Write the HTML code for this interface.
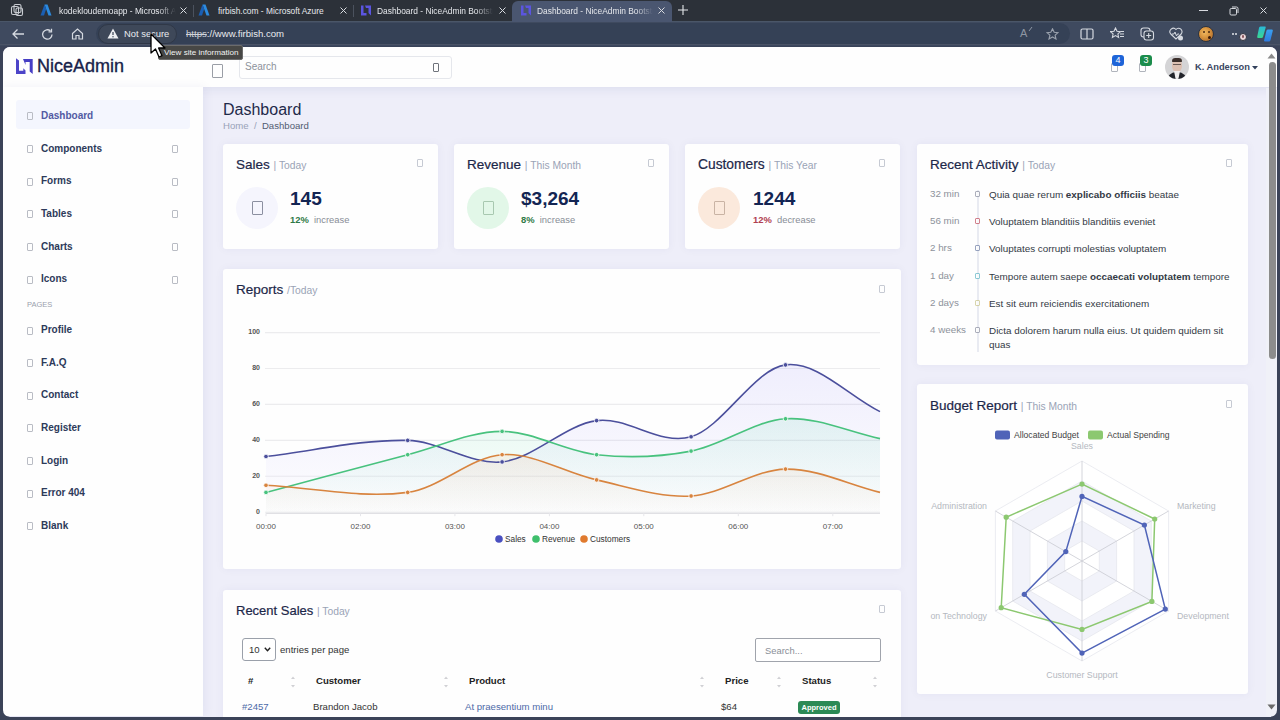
<!DOCTYPE html>
<html><head><meta charset="utf-8">
<style>
*{box-sizing:border-box;margin:0;padding:0}
html,body{width:1280px;height:720px;overflow:hidden;background:#2e343d;font-family:"Liberation Sans",sans-serif}
.a{position:absolute;white-space:nowrap}
#tabs{position:absolute;left:0;top:0;width:1280px;height:21px;background:#2c3139}
#toolbar{position:absolute;left:0;top:21px;width:1280px;height:26px;background:#3f4a5f;border-top:1px solid #4a5668;border-bottom:1px solid #343a46}
#frame{position:absolute;left:0;top:46px;width:1280px;height:674px;background:#3b4358}
#content{position:absolute;left:3px;top:47px;width:1274px;height:670px;background:#eeeef9;border-radius:7px;overflow:hidden}
.tabt{color:#e6e8ec;font-size:8.4px;top:6px;overflow:hidden;-webkit-mask-image:linear-gradient(to right,#000 85%,transparent)}
.tabx{color:#d8dbe0;font-size:11px;top:4px}
.card{position:absolute;background:#fefefe;border-radius:3px;box-shadow:0 0 10px rgba(30,20,112,0.05)}
.ct{position:absolute;color:#1c2749;font-size:13.5px;white-space:nowrap;-webkit-text-stroke:0.2px #1c2749}
.ct span{color:#9aa3b6;font-size:10.3px;-webkit-text-stroke:0}
.dots{position:absolute;width:6px;height:8px;border:1px solid #c6cad3;border-radius:1px}
.nav{position:absolute;left:41px;color:#2d3a5a;font-size:10px;font-weight:700;white-space:nowrap}
.nico{position:absolute;left:27px;width:6px;height:8px;border:1px solid #b9bcc4;border-radius:1px}
.chev{position:absolute;left:172px;width:6px;height:8px;border:1px solid #b9bcc4;border-radius:1px}
</style></head>
<body>
<div id="tabs"></div>
<div id="toolbar"></div>
<div id="frame"></div>
<!-- tab strip -->
<svg class="a" style="left:10px;top:3px" width="14" height="14" viewBox="0 0 14 14"><g fill="none" stroke="#c9ccd2" stroke-width="1.1"><rect x="1.5" y="3.5" width="7" height="8" rx="1.5"/><rect x="4" y="1.5" width="7" height="8" rx="1.5"/><rect x="6" y="5" width="6.5" height="7.5" rx="1.5"/></g></svg>
<svg class="a" style="left:40px;top:4px" width="12" height="12" viewBox="0 0 12 12"><path d="M4.5 0.5 L7.5 0.5 L11.5 11.5 L8.5 11.5 Z" fill="#2c8be0"/><path d="M4.5 0.5 L0.5 11.5 L4 11.5 L6.2 5 Z" fill="#1a5fb4"/></svg>
<div class="a tabt" style="left:59px;width:117px">kodekloudemoapp - Microsoft A</div>
<svg class="a" style="left:179px;top:6px" width="9" height="9" viewBox="0 0 9 9"><path d="M1.5 1.5 L7.5 7.5 M7.5 1.5 L1.5 7.5" stroke="#d8dbe0" stroke-width="1"/></svg>
<div class="a" style="left:193px;top:5px;width:1px;height:12px;background:#4b525e"></div>
<svg class="a" style="left:198px;top:4px" width="12" height="12" viewBox="0 0 12 12"><path d="M4.5 0.5 L7.5 0.5 L11.5 11.5 L8.5 11.5 Z" fill="#2c8be0"/><path d="M4.5 0.5 L0.5 11.5 L4 11.5 L6.2 5 Z" fill="#1a5fb4"/></svg>
<div class="a tabt" style="left:218px;width:120px;-webkit-mask-image:none">firbish.com - Microsoft Azure</div>
<svg class="a" style="left:339px;top:6px" width="9" height="9" viewBox="0 0 9 9"><path d="M1.5 1.5 L7.5 7.5 M7.5 1.5 L1.5 7.5" stroke="#d8dbe0" stroke-width="1"/></svg>
<div class="a" style="left:353px;top:5px;width:1px;height:12px;background:#4b525e"></div>
<svg class="a" style="left:360px;top:4px" width="12" height="12" viewBox="0 0 12 12"><path d="M1 1.5 L3.5 1.5 L3.5 9 L6.5 9 L6.5 11.5 L1 11.5 Z M5 1.5 L11 1.5 L11 11.5 L8.5 9 L8.5 4 L6 4 Z" fill="#5b55e0"/></svg>
<div class="a tabt" style="left:377px;width:116px">Dashboard - NiceAdmin Bootstrap</div>
<svg class="a" style="left:498px;top:6px" width="9" height="9" viewBox="0 0 9 9"><path d="M1.5 1.5 L7.5 7.5 M7.5 1.5 L1.5 7.5" stroke="#d8dbe0" stroke-width="1"/></svg>
<div class="a" style="left:512px;top:1px;width:160px;height:21px;background:#4a5670;border-radius:6px 6px 0 0"></div>
<svg class="a" style="left:520px;top:4px" width="12" height="12" viewBox="0 0 12 12"><path d="M1 1.5 L3.5 1.5 L3.5 9 L6.5 9 L6.5 11.5 L1 11.5 Z M5 1.5 L11 1.5 L11 11.5 L8.5 9 L8.5 4 L6 4 Z" fill="#5b55e0"/></svg>
<div class="a tabt" style="left:537px;width:116px">Dashboard - NiceAdmin Bootstrap</div>
<svg class="a" style="left:657px;top:6px" width="9" height="9" viewBox="0 0 9 9"><path d="M1.5 1.5 L7.5 7.5 M7.5 1.5 L1.5 7.5" stroke="#d8dbe0" stroke-width="1"/></svg>
<svg class="a" style="left:677px;top:4px" width="12" height="12" viewBox="0 0 12 12"><path d="M6 1 V11 M1 6 H11" stroke="#e6e8ec" stroke-width="1.1"/></svg>
<div class="a" style="left:1199px;top:10px;width:9px;height:1px;background:#d8dbe0"></div>
<svg class="a" style="left:1229px;top:6px" width="10" height="10" viewBox="0 0 10 10"><rect x="1" y="2.5" width="6.5" height="6.5" rx="1.2" fill="none" stroke="#d8dbe0" stroke-width="1"/><path d="M3 1 H7.5 Q9 1 9 2.5 V7" fill="none" stroke="#d8dbe0" stroke-width="1"/></svg>
<svg class="a" style="left:1259px;top:6px" width="9" height="9" viewBox="0 0 9 9"><path d="M1.5 1.5 L7.5 7.5 M7.5 1.5 L1.5 7.5" stroke="#d8dbe0" stroke-width="1"/></svg>
<!-- toolbar -->
<svg class="a" style="left:11px;top:28px" width="14" height="12" viewBox="0 0 14 12"><path d="M13 6 H2 M6.5 1.5 L2 6 L6.5 10.5" fill="none" stroke="#d5d9e0" stroke-width="1.3"/></svg>
<svg class="a" style="left:41px;top:28px" width="13" height="13" viewBox="0 0 13 13"><path d="M11 6.5 A4.7 4.7 0 1 1 9.5 3" fill="none" stroke="#d5d9e0" stroke-width="1.3"/><path d="M10.5 0.8 V3.8 H7.5" fill="none" stroke="#d5d9e0" stroke-width="1.3"/></svg>
<svg class="a" style="left:71px;top:28px" width="13" height="12" viewBox="0 0 13 12"><path d="M1.5 5.5 L6.5 1 L11.5 5.5 V11 H8 V7.5 H5 V11 H1.5 Z" fill="none" stroke="#d5d9e0" stroke-width="1.2"/></svg>
<div class="a" style="left:96px;top:23px;width:974px;height:21px;border-radius:11px;background:#354156"></div>
<div class="a" style="left:0;top:44px;width:1280px;height:1px;background:#4c5466"></div>
<div class="a" style="left:98px;top:24px;width:79px;height:20px;border-radius:10px;background:#3e4859;border:1px solid #303847"></div>
<svg class="a" style="left:107px;top:28px" width="12" height="11" viewBox="0 0 12 11"><path d="M6 0.5 L11.5 10.5 H0.5 Z" fill="#eef0f3"/><path d="M6 4 V7" stroke="#353f50" stroke-width="1.2"/><circle cx="6" cy="8.7" r="0.7" fill="#353f50"/></svg>
<div class="a" style="left:124px;top:28px;color:#e9ebef;font-size:9.4px">Not secure</div>
<div class="a" style="left:186px;top:28px;color:#e9ebef;font-size:9.6px"><span style="text-decoration:line-through;color:#d0d3d9">https</span>://www.firbish.com</div>

<div id="content">
</div>

<!-- right toolbar icons -->

<div class="a" style="left:1020px;top:27px;color:#8e96a3;font-size:11px">A</div>
<svg class="a" style="left:1028px;top:26px" width="5" height="6" viewBox="0 0 5 6"><path d="M1 5 L4 1" stroke="#8e96a3" stroke-width="1"/></svg>
<svg class="a" style="left:1046px;top:28px" width="13" height="12" viewBox="0 0 13 12"><path d="M6.5 0.8 L8.2 4.3 L12 4.7 L9.1 7.2 L10 11 L6.5 9 L3 11 L3.9 7.2 L1 4.7 L4.8 4.3 Z" fill="none" stroke="#9aa1ad" stroke-width="1.1"/></svg>
<svg class="a" style="left:1080px;top:28px" width="14" height="12" viewBox="0 0 14 12"><rect x="1" y="1" width="12" height="10" rx="1.5" fill="none" stroke="#d5d9e0" stroke-width="1.2"/><path d="M7 1 V11" stroke="#d5d9e0" stroke-width="1.2"/></svg>
<svg class="a" style="left:1110px;top:27px" width="15" height="13" viewBox="0 0 15 13"><path d="M5.5 1 L7 4.2 L10.5 4.6 L7.9 6.9 L8.6 10.4 L5.5 8.6 L2.4 10.4 L3.1 6.9 L0.5 4.6 L4 4.2 Z" fill="none" stroke="#d5d9e0" stroke-width="1.1"/><path d="M10 7 H14 M10 9.5 H14 M11 4.5 H14" stroke="#d5d9e0" stroke-width="1.1"/></svg>
<svg class="a" style="left:1140px;top:27px" width="15" height="14" viewBox="0 0 15 14"><rect x="1" y="1" width="9" height="9" rx="2.5" fill="none" stroke="#d5d9e0" stroke-width="1.1"/><rect x="4" y="4" width="9.5" height="9" rx="2.5" fill="#3a4555" stroke="#d5d9e0" stroke-width="1.1"/><path d="M8.7 6 V11 M6.2 8.5 H11.2" stroke="#d5d9e0" stroke-width="1.1"/></svg>
<svg class="a" style="left:1169px;top:27px" width="15" height="14" viewBox="0 0 15 14"><path d="M7 12 L1.8 7 A3 3 0 0 1 7 2.5 A3 3 0 0 1 12.2 7 Z" fill="none" stroke="#d5d9e0" stroke-width="1.1"/><path d="M3 7 H5 L6 5 L7.5 9 L8.5 7 H10" fill="none" stroke="#d5d9e0" stroke-width="1"/><circle cx="11.5" cy="11" r="2.5" fill="#d5d9e0"/></svg>
<div class="a" style="left:1198px;top:26px;width:16px;height:16px;border-radius:50%;background:radial-gradient(circle at 40% 40%,#f0b860 0,#d99640 40%,#b87430 75%,#7a4a20 100%);border:1px solid #2e3440"></div>
<div class="a" style="left:1203px;top:31px;width:2px;height:2px;border-radius:50%;background:#4a2a10"></div>
<div class="a" style="left:1208px;top:31px;width:2px;height:2px;border-radius:50%;background:#4a2a10"></div>
<div class="a" style="left:1208px;top:36px;width:3px;height:3px;border-radius:50%;background:#3a1a08"></div>

<div class="a" style="left:1232px;top:33px;width:2px;height:2px;background:#e5e7ea;border-radius:1px"></div>
<div class="a" style="left:1235px;top:33px;width:2px;height:2px;background:#e5e7ea;border-radius:1px"></div>
<div class="a" style="left:1239px;top:33px;width:8px;height:8px;border-radius:50%;background:#ecd8dc;border:1px solid #2e3440"></div><div class="a" style="left:1242px;top:35px;width:2px;height:3px;border-radius:1px;background:#8a5a60"></div>
<svg class="a" style="left:1256px;top:25px" width="18" height="18" viewBox="0 0 18 18"><defs><linearGradient id="cp" x1="0" y1="0" x2="0" y2="1"><stop offset="0" stop-color="#2ab8d8"/><stop offset="1" stop-color="#3ad890"/></linearGradient><linearGradient id="cp2" x1="0" y1="0" x2="0" y2="1"><stop offset="0" stop-color="#3aa0f0"/><stop offset="1" stop-color="#2f7be0"/></linearGradient></defs><path d="M3 3 Q3 1.5 4.5 1.5 H9 Q10 1.5 9.7 2.5 L7 12 Q6.7 13 5.5 13 H2.2 Q1 13 1.2 11.8 Z" fill="url(#cp)"/><path d="M10.5 5.5 Q10.8 4.5 12 4.5 H15.8 Q17 4.5 16.8 5.7 L14.5 15 Q14.2 16.5 12.8 16.5 H9 Q7.8 16.5 8.1 15.3 Z" fill="url(#cp2)"/></svg>
<!-- header -->
<div class="a" style="left:3px;top:47px;width:1274px;height:40px;background:#fefefe;border-radius:7px 7px 0 0;box-shadow:0 2px 12px rgba(1,41,112,0.08)"></div>
<svg class="a" style="left:16px;top:58px" width="17" height="17" viewBox="0 0 17 17"><path d="M0,0.3 L3,2.5 L3,12.8 L7.3,12.8 L7.3,10.3 L9.5,12.5 L9.5,16 L0,16 Z" fill="#4c44c8"/><path d="M7,1 L16.7,1 L16.7,16 L13.7,13.5 L13.7,4 L9.5,4 L9.5,7 Z" fill="#463ec4"/></svg>
<div class="a" style="left:37px;top:56px;color:#18224a;font-size:18px;font-weight:400;-webkit-text-stroke:0.35px #18224a">NiceAdmin</div>
<div class="a" style="left:212px;top:64px;width:11px;height:14px;border:1px solid #9a9ea6;border-radius:1px"></div>
<div class="a" style="left:239px;top:56px;width:213px;height:23px;border:1px solid #e5e7ec;border-radius:3px;background:#fefefe"></div>
<div class="a" style="left:245px;top:61px;color:#8d929b;font-size:10px">Search</div>
<div class="a" style="left:433px;top:63px;width:6px;height:9px;border:1px solid #6f737b;border-radius:1px"></div>
<div class="a" style="left:1111px;top:63px;width:7px;height:9px;border:1px solid #b0b4bc;border-radius:1px"></div>
<div class="a" style="left:1112px;top:55px;width:12px;height:11px;background:#1e64d8;border-radius:3px;color:#fff;font-size:9px;text-align:center;line-height:11px">4</div>
<div class="a" style="left:1139px;top:63px;width:7px;height:9px;border:1px solid #b0b4bc;border-radius:1px"></div>
<div class="a" style="left:1140px;top:55px;width:12px;height:11px;background:#1b8c4b;border-radius:3px;color:#fff;font-size:9px;text-align:center;line-height:11px">3</div>
<div class="a" style="left:1165px;top:55px;width:24px;height:24px;border-radius:50%;background:#d4d4d6;overflow:hidden">
  <div class="a" style="left:7px;top:4px;width:10px;height:13px;border-radius:45%;background:#dcc0b2"></div>
  <div class="a" style="left:7px;top:3px;width:10px;height:4px;border-radius:5px 5px 1px 1px;background:#3a2e2a"></div>
  <div class="a" style="left:8px;top:9px;width:8px;height:1px;background:#6a5a55"></div>
  <div class="a" style="left:2px;top:17px;width:20px;height:10px;border-radius:9px 9px 0 0;background:#22242a"></div>
  <div class="a" style="left:9px;top:16px;width:6px;height:9px;background:#f0eeee;clip-path:polygon(0 0,100% 0,70% 100%,30% 100%)"></div>
</div>
<div class="a" style="left:1195px;top:62px;color:#3a4662;font-size:9.3px;font-weight:700">K. Anderson</div>
<svg class="a" style="left:1252px;top:66px" width="6" height="4" viewBox="0 0 6 4"><path d="M0 0 H6 L3 3.5 Z" fill="#33415c"/></svg>
<!-- sidebar -->
<div class="a" style="left:3px;top:87px;width:199.5px;height:629px;background:#fefefe;box-shadow:2px 0 10px rgba(1,41,112,0.06)"></div>
<div class="a" style="left:16px;top:100px;width:174px;height:29px;background:#f4f6fe;border-radius:3px"></div>
<div class="nico" style="top:112px"></div><div class="nav" style="top:110px;color:#525aa3">Dashboard</div>
<div class="nico" style="top:145px"></div><div class="nav" style="top:143px">Components</div><div class="chev" style="top:145px"></div>
<div class="nico" style="top:178px"></div><div class="nav" style="top:175px">Forms</div><div class="chev" style="top:178px"></div>
<div class="nico" style="top:210px"></div><div class="nav" style="top:208px">Tables</div><div class="chev" style="top:210px"></div>
<div class="nico" style="top:243px"></div><div class="nav" style="top:241px">Charts</div><div class="chev" style="top:243px"></div>
<div class="nico" style="top:276px"></div><div class="nav" style="top:273px">Icons</div><div class="chev" style="top:276px"></div>
<div class="a" style="left:27px;top:300px;color:#9aa0ad;font-size:7.5px">PAGES</div>
<div class="nico" style="top:327px"></div><div class="nav" style="top:324px">Profile</div>
<div class="nico" style="top:359px"></div><div class="nav" style="top:357px">F.A.Q</div>
<div class="nico" style="top:392px"></div><div class="nav" style="top:389px">Contact</div>
<div class="nico" style="top:424px"></div><div class="nav" style="top:422px">Register</div>
<div class="nico" style="top:457px"></div><div class="nav" style="top:455px">Login</div>
<div class="nico" style="top:490px"></div><div class="nav" style="top:487px">Error 404</div>
<div class="nico" style="top:522px"></div><div class="nav" style="top:520px">Blank</div>

<!-- info cards -->
<div class="card" style="left:223px;top:144px;width:215px;height:105px"></div>
<div class="ct" style="left:236px;top:157px">Sales <span>| Today</span></div>
<div class="dots" style="left:417px;top:159px"></div>
<div class="a" style="left:236px;top:187px;width:42px;height:42px;border-radius:50%;background:#f5f5fd"></div>
<div class="a" style="left:252px;top:201px;width:11px;height:14px;border:1px solid #8b8fa0;border-radius:1px"></div>
<div class="a" style="left:290px;top:188px;color:#132553;font-size:19px;font-weight:700">145</div>
<div class="a" style="left:290px;top:214px;font-size:9.4px;color:#888d96"><b style="color:#2f7a47">12%</b>&nbsp; increase</div>

<div class="card" style="left:454px;top:144px;width:215px;height:105px"></div>
<div class="ct" style="left:467px;top:157px">Revenue <span>| This Month</span></div>
<div class="dots" style="left:648px;top:159px"></div>
<div class="a" style="left:467px;top:187px;width:42px;height:42px;border-radius:50%;background:#e2f7e8"></div>
<div class="a" style="left:483px;top:201px;width:11px;height:14px;border:1px solid #a8c8b0;border-radius:1px"></div>
<div class="a" style="left:521px;top:188px;color:#132553;font-size:19px;font-weight:700">$3,264</div>
<div class="a" style="left:521px;top:214px;font-size:9.4px;color:#888d96"><b style="color:#2f7a47">8%</b>&nbsp; increase</div>

<div class="card" style="left:685px;top:144px;width:215px;height:105px"></div>
<div class="ct" style="left:698px;top:157px;font-size:13.8px">Customers <span>| This Year</span></div>
<div class="dots" style="left:879px;top:159px"></div>
<div class="a" style="left:698px;top:187px;width:42px;height:42px;border-radius:50%;background:#fbe9dc"></div>
<div class="a" style="left:714px;top:201px;width:11px;height:14px;border:1px solid #c9b3a4;border-radius:1px"></div>
<div class="a" style="left:753px;top:188px;color:#132553;font-size:19px;font-weight:700">1244</div>
<div class="a" style="left:753px;top:214px;font-size:9.4px;color:#888d96"><b style="color:#b04050">12%</b>&nbsp; decrease</div>

<!-- recent activity -->
<div class="card" style="left:917px;top:144px;width:331px;height:221px"></div>
<div class="ct" style="left:930px;top:157px">Recent Activity <span>| Today</span></div>
<div class="dots" style="left:1226px;top:159px"></div>
<div class="a" style="left:977px;top:190px;width:2px;height:162px;background:#e9ebf2"></div>
<div class="a" style="left:930px;top:188px;color:#8d929b;font-size:9.8px">32 min</div>
<div class="a" style="left:975px;top:191px;width:5px;height:6px;opacity:0.7;border:1px solid #8b8fa0;background:#fff;border-radius:1px"></div>
<div class="a" style="left:989px;top:188px;color:#333a45;font-size:9.9px;line-height:14px">Quia quae rerum <b>explicabo officiis</b> beatae</div>
<div class="a" style="left:930px;top:215px;color:#8d929b;font-size:9.8px">56 min</div>
<div class="a" style="left:975px;top:218px;width:5px;height:6px;opacity:0.7;border:1px solid #c24e5e;background:#fff;border-radius:1px"></div>
<div class="a" style="left:989px;top:215px;color:#333a45;font-size:9.9px;line-height:14px">Voluptatem blanditiis blanditiis eveniet</div>
<div class="a" style="left:930px;top:242px;color:#8d929b;font-size:9.8px">2 hrs</div>
<div class="a" style="left:975px;top:245px;width:5px;height:6px;opacity:0.7;border:1px solid #6f7fa6;background:#fff;border-radius:1px"></div>
<div class="a" style="left:989px;top:242px;color:#333a45;font-size:9.9px;line-height:14px">Voluptates corrupti molestias voluptatem</div>
<div class="a" style="left:930px;top:270px;color:#8d929b;font-size:9.8px">1 day</div>
<div class="a" style="left:975px;top:273px;width:5px;height:6px;opacity:0.7;border:1px solid #5fb5c5;background:#fff;border-radius:1px"></div>
<div class="a" style="left:989px;top:270px;color:#333a45;font-size:9.9px;line-height:14px">Tempore autem saepe <b>occaecati voluptatem</b> tempore</div>
<div class="a" style="left:930px;top:297px;color:#8d929b;font-size:9.8px">2 days</div>
<div class="a" style="left:975px;top:300px;width:5px;height:6px;opacity:0.7;border:1px solid #c9c48a;background:#fff;border-radius:1px"></div>
<div class="a" style="left:989px;top:297px;color:#333a45;font-size:9.9px;line-height:14px">Est sit eum reiciendis exercitationem</div>
<div class="a" style="left:930px;top:324px;color:#8d929b;font-size:9.8px">4 weeks</div>
<div class="a" style="left:975px;top:327px;width:5px;height:6px;opacity:0.7;border:1px solid #8b8fa0;background:#fff;border-radius:1px"></div>
<div class="a" style="left:989px;top:324px;color:#333a45;font-size:9.9px;line-height:14px">Dicta dolorem harum nulla eius. Ut quidem quidem sit<br>quas</div>

<!-- reports -->
<div class="card" style="left:223px;top:269px;width:678px;height:300px"></div>
<div class="ct" style="left:236px;top:282px">Reports <span>/Today</span></div>
<div class="dots" style="left:879px;top:285px"></div>
<!--CHART--><svg class="a" style="left:223px;top:300px" width="677" height="260" viewBox="223 300 677 260">
<defs>
<linearGradient id="gSales" x1="0" y1="0" x2="0" y2="1"><stop offset="0" stop-color="#7a6ef5" stop-opacity="0.11"/><stop offset="1" stop-color="#7a6ef5" stop-opacity="0.01"/></linearGradient>
<linearGradient id="gRevenue" x1="0" y1="0" x2="0" y2="1"><stop offset="0" stop-color="#3fd39a" stop-opacity="0.11"/><stop offset="1" stop-color="#3fd39a" stop-opacity="0.01"/></linearGradient>
<linearGradient id="gCustomers" x1="0" y1="0" x2="0" y2="1"><stop offset="0" stop-color="#ff9d5c" stop-opacity="0.11"/><stop offset="1" stop-color="#ff9d5c" stop-opacity="0.01"/></linearGradient>
</defs>
<line x1="265" x2="880" y1="512.2" y2="512.2" stroke="#ececee" stroke-width="1.1"/>
<text x="260" y="514.0" text-anchor="end" font-size="7" font-weight="700" fill="#555" font-family="Liberation Sans">0</text>
<line x1="265" x2="880" y1="476.3" y2="476.3" stroke="#ececee" stroke-width="1.1"/>
<text x="260" y="478.1" text-anchor="end" font-size="7" font-weight="700" fill="#555" font-family="Liberation Sans">20</text>
<line x1="265" x2="880" y1="440.4" y2="440.4" stroke="#ececee" stroke-width="1.1"/>
<text x="260" y="442.2" text-anchor="end" font-size="7" font-weight="700" fill="#555" font-family="Liberation Sans">40</text>
<line x1="265" x2="880" y1="404.4" y2="404.4" stroke="#ececee" stroke-width="1.1"/>
<text x="260" y="406.2" text-anchor="end" font-size="7" font-weight="700" fill="#555" font-family="Liberation Sans">60</text>
<line x1="265" x2="880" y1="368.5" y2="368.5" stroke="#ececee" stroke-width="1.1"/>
<text x="260" y="370.3" text-anchor="end" font-size="7" font-weight="700" fill="#555" font-family="Liberation Sans">80</text>
<line x1="265" x2="880" y1="332.6" y2="332.6" stroke="#ececee" stroke-width="1.1"/>
<text x="260" y="334.4" text-anchor="end" font-size="7" font-weight="700" fill="#555" font-family="Liberation Sans">100</text>
<line x1="266" x2="880" y1="513.4" y2="513.4" stroke="#e0e0e4" stroke-width="1.2"/>
<line x1="266.0" x2="266.0" y1="513.2" y2="516.2" stroke="#e6e6ea"/>
<text x="266.0" y="529.2" text-anchor="middle" font-size="8" fill="#555" font-family="Liberation Sans">00:00</text>
<line x1="360.5" x2="360.5" y1="513.2" y2="516.2" stroke="#e6e6ea"/>
<text x="360.5" y="529.2" text-anchor="middle" font-size="8" fill="#555" font-family="Liberation Sans">02:00</text>
<line x1="454.9" x2="454.9" y1="513.2" y2="516.2" stroke="#e6e6ea"/>
<text x="454.9" y="529.2" text-anchor="middle" font-size="8" fill="#555" font-family="Liberation Sans">03:00</text>
<line x1="549.4" x2="549.4" y1="513.2" y2="516.2" stroke="#e6e6ea"/>
<text x="549.4" y="529.2" text-anchor="middle" font-size="8" fill="#555" font-family="Liberation Sans">04:00</text>
<line x1="643.8" x2="643.8" y1="513.2" y2="516.2" stroke="#e6e6ea"/>
<text x="643.8" y="529.2" text-anchor="middle" font-size="8" fill="#555" font-family="Liberation Sans">05:00</text>
<line x1="738.3" x2="738.3" y1="513.2" y2="516.2" stroke="#e6e6ea"/>
<text x="738.3" y="529.2" text-anchor="middle" font-size="8" fill="#555" font-family="Liberation Sans">06:00</text>
<line x1="832.8" x2="832.8" y1="513.2" y2="516.2" stroke="#e6e6ea"/>
<text x="832.8" y="529.2" text-anchor="middle" font-size="8" fill="#555" font-family="Liberation Sans">07:00</text>
<path d="M266.0,456.5 C313.2,451.1 360.5,439.3 407.7,440.4 C439.2,441.1 470.7,465.2 502.1,461.9 C533.6,458.6 565.1,424.8 596.6,420.6 C628.1,416.4 659.6,446.0 691.1,436.8 C722.6,427.5 754.0,369.1 785.5,364.9 C817.0,360.7 848.5,396.1 880.0,411.6 L880,512.2 L266,512.2 Z" fill="url(#gSales)"/>
<path d="M266.0,492.4 C313.2,479.9 360.5,466.9 407.7,454.7 C439.2,446.6 470.7,431.4 502.1,431.4 C533.6,431.4 565.1,451.4 596.6,454.7 C628.1,458.0 659.6,457.1 691.1,451.1 C722.6,445.1 754.0,420.9 785.5,418.8 C817.0,416.7 848.5,432.0 880.0,438.6 L880,512.2 L266,512.2 Z" fill="url(#gRevenue)"/>
<path d="M266.0,485.3 C313.2,487.7 360.5,498.6 407.7,492.4 C439.2,488.4 470.7,456.8 502.1,454.7 C533.6,452.6 565.1,473.0 596.6,479.9 C628.1,486.8 659.6,497.8 691.1,496.0 C722.6,494.2 754.0,469.7 785.5,469.1 C817.0,468.5 848.5,484.7 880.0,492.4 L880,512.2 L266,512.2 Z" fill="url(#gCustomers)"/>
<path d="M266.0,456.5 C313.2,451.1 360.5,439.3 407.7,440.4 C439.2,441.1 470.7,465.2 502.1,461.9 C533.6,458.6 565.1,424.8 596.6,420.6 C628.1,416.4 659.6,446.0 691.1,436.8 C722.6,427.5 754.0,369.1 785.5,364.9 C817.0,360.7 848.5,396.1 880.0,411.6" fill="none" stroke="#4b4f9c" stroke-width="1.6"/>
<circle cx="266.0" cy="456.5" r="2.3" fill="#4b4f9c" stroke="#fff" stroke-width="0.8"/>
<circle cx="407.7" cy="440.4" r="2.3" fill="#4b4f9c" stroke="#fff" stroke-width="0.8"/>
<circle cx="502.1" cy="461.9" r="2.3" fill="#4b4f9c" stroke="#fff" stroke-width="0.8"/>
<circle cx="596.6" cy="420.6" r="2.3" fill="#4b4f9c" stroke="#fff" stroke-width="0.8"/>
<circle cx="691.1" cy="436.8" r="2.3" fill="#4b4f9c" stroke="#fff" stroke-width="0.8"/>
<circle cx="785.5" cy="364.9" r="2.3" fill="#4b4f9c" stroke="#fff" stroke-width="0.8"/>
<path d="M266.0,492.4 C313.2,479.9 360.5,466.9 407.7,454.7 C439.2,446.6 470.7,431.4 502.1,431.4 C533.6,431.4 565.1,451.4 596.6,454.7 C628.1,458.0 659.6,457.1 691.1,451.1 C722.6,445.1 754.0,420.9 785.5,418.8 C817.0,416.7 848.5,432.0 880.0,438.6" fill="none" stroke="#48c27e" stroke-width="1.6"/>
<circle cx="266.0" cy="492.4" r="2.3" fill="#48c27e" stroke="#fff" stroke-width="0.8"/>
<circle cx="407.7" cy="454.7" r="2.3" fill="#48c27e" stroke="#fff" stroke-width="0.8"/>
<circle cx="502.1" cy="431.4" r="2.3" fill="#48c27e" stroke="#fff" stroke-width="0.8"/>
<circle cx="596.6" cy="454.7" r="2.3" fill="#48c27e" stroke="#fff" stroke-width="0.8"/>
<circle cx="691.1" cy="451.1" r="2.3" fill="#48c27e" stroke="#fff" stroke-width="0.8"/>
<circle cx="785.5" cy="418.8" r="2.3" fill="#48c27e" stroke="#fff" stroke-width="0.8"/>
<path d="M266.0,485.3 C313.2,487.7 360.5,498.6 407.7,492.4 C439.2,488.4 470.7,456.8 502.1,454.7 C533.6,452.6 565.1,473.0 596.6,479.9 C628.1,486.8 659.6,497.8 691.1,496.0 C722.6,494.2 754.0,469.7 785.5,469.1 C817.0,468.5 848.5,484.7 880.0,492.4" fill="none" stroke="#d8843f" stroke-width="1.6"/>
<circle cx="266.0" cy="485.3" r="2.3" fill="#d8843f" stroke="#fff" stroke-width="0.8"/>
<circle cx="407.7" cy="492.4" r="2.3" fill="#d8843f" stroke="#fff" stroke-width="0.8"/>
<circle cx="502.1" cy="454.7" r="2.3" fill="#d8843f" stroke="#fff" stroke-width="0.8"/>
<circle cx="596.6" cy="479.9" r="2.3" fill="#d8843f" stroke="#fff" stroke-width="0.8"/>
<circle cx="691.1" cy="496.0" r="2.3" fill="#d8843f" stroke="#fff" stroke-width="0.8"/>
<circle cx="785.5" cy="469.1" r="2.3" fill="#d8843f" stroke="#fff" stroke-width="0.8"/>
<circle cx="499" cy="539" r="3.8" fill="#4a50c0"/>
<text x="505" y="542" font-size="8.3" fill="#333" font-family="Liberation Sans">Sales</text>
<circle cx="536" cy="539" r="3.8" fill="#3fbf6c"/>
<text x="542" y="542" font-size="8.3" fill="#333" font-family="Liberation Sans">Revenue</text>
<circle cx="584" cy="539" r="3.8" fill="#e07a2e"/>
<text x="590" y="542" font-size="8.3" fill="#333" font-family="Liberation Sans">Customers</text>
</svg><!--/CHART-->
<!-- budget -->
<div class="card" style="left:917px;top:384px;width:331px;height:310px"></div>
<div class="ct" style="left:930px;top:398px">Budget Report <span>| This Month</span></div>
<div class="dots" style="left:1226px;top:400px"></div>
<!--RADAR--><svg class="a" style="left:917px;top:385px" width="330" height="308" viewBox="917 385 330 308">
<polygon points="1082.0,461.0 995.4,511.0 995.4,611.0 1082.0,661.0 1168.6,611.0 1168.6,511.0" fill="#ffffff" stroke="#e6e7ee" stroke-width="0.8"/>
<polygon points="1082.0,481.0 1012.7,521.0 1012.7,601.0 1082.0,641.0 1151.3,601.0 1151.3,521.0" fill="#f2f3fa" stroke="#e6e7ee" stroke-width="0.8"/>
<polygon points="1082.0,501.0 1030.0,531.0 1030.0,591.0 1082.0,621.0 1134.0,591.0 1134.0,531.0" fill="#ffffff" stroke="#e6e7ee" stroke-width="0.8"/>
<polygon points="1082.0,521.0 1047.4,541.0 1047.4,581.0 1082.0,601.0 1116.6,581.0 1116.6,541.0" fill="#f2f3fa" stroke="#e6e7ee" stroke-width="0.8"/>
<polygon points="1082.0,541.0 1064.7,551.0 1064.7,571.0 1082.0,581.0 1099.3,571.0 1099.3,551.0" fill="#ffffff" stroke="#e6e7ee" stroke-width="0.8"/>
<line x1="1082" y1="561" x2="1082.0" y2="461.0" stroke="#c9cad2" stroke-width="0.8"/>
<line x1="1082" y1="561" x2="995.4" y2="511.0" stroke="#c9cad2" stroke-width="0.8"/>
<line x1="1082" y1="561" x2="995.4" y2="611.0" stroke="#c9cad2" stroke-width="0.8"/>
<line x1="1082" y1="561" x2="1082.0" y2="661.0" stroke="#c9cad2" stroke-width="0.8"/>
<line x1="1082" y1="561" x2="1168.6" y2="611.0" stroke="#c9cad2" stroke-width="0.8"/>
<line x1="1082" y1="561" x2="1168.6" y2="511.0" stroke="#c9cad2" stroke-width="0.8"/>
<polygon points="1082.0,484.1 1006.2,517.2 1001.2,607.7 1082.0,629.4 1151.9,601.4 1154.7,519.0" fill="none" stroke="#8cc870" stroke-width="1.5"/>
<circle cx="1082.0" cy="484.1" r="2.6" fill="#8cc870"/>
<circle cx="1006.2" cy="517.2" r="2.6" fill="#8cc870"/>
<circle cx="1001.2" cy="607.7" r="2.6" fill="#8cc870"/>
<circle cx="1082.0" cy="629.4" r="2.6" fill="#8cc870"/>
<circle cx="1151.9" cy="601.4" r="2.6" fill="#8cc870"/>
<circle cx="1154.7" cy="519.0" r="2.6" fill="#8cc870"/>
<polygon points="1082.0,496.4 1065.8,551.6 1024.3,594.3 1082.0,653.1 1165.3,609.1 1144.4,525.0" fill="none" stroke="#5064b8" stroke-width="1.5"/>
<circle cx="1082.0" cy="496.4" r="2.6" fill="#5064b8"/>
<circle cx="1065.8" cy="551.6" r="2.6" fill="#5064b8"/>
<circle cx="1024.3" cy="594.3" r="2.6" fill="#5064b8"/>
<circle cx="1082.0" cy="653.1" r="2.6" fill="#5064b8"/>
<circle cx="1165.3" cy="609.1" r="2.6" fill="#5064b8"/>
<circle cx="1144.4" cy="525.0" r="2.6" fill="#5064b8"/>
<text x="1082" y="449" text-anchor="middle" font-size="8.8" fill="#b4b8c0" font-family="Liberation Sans">Sales</text>
<text x="1177" y="509" text-anchor="start" font-size="8.8" fill="#b4b8c0" font-family="Liberation Sans">Marketing</text>
<text x="1177" y="619" text-anchor="start" font-size="8.8" fill="#b4b8c0" font-family="Liberation Sans">Development</text>
<text x="1082" y="677.5" text-anchor="middle" font-size="8.8" fill="#b4b8c0" font-family="Liberation Sans">Customer Support</text>
<text x="987" y="619" text-anchor="end" font-size="8.8" fill="#b4b8c0" font-family="Liberation Sans">on Technology</text>
<text x="987" y="509" text-anchor="end" font-size="8.8" fill="#b4b8c0" font-family="Liberation Sans">Administration</text>
<rect x="995" y="430.5" width="15" height="9" rx="2" fill="#5064b8"/>
<text x="1014" y="438.3" font-size="8.6" fill="#444" font-family="Liberation Sans">Allocated Budget</text>
<rect x="1088" y="430.5" width="15" height="9" rx="2" fill="#8cc870"/>
<text x="1107" y="438.3" font-size="8.6" fill="#444" font-family="Liberation Sans">Actual Spending</text>
</svg><!--/RADAR-->
<!-- recent sales -->
<div class="card" style="left:223px;top:590px;width:678px;height:140px"></div>
<div class="ct" style="left:236px;top:602.5px;font-size:13px">Recent Sales <span>| Today</span></div>
<div class="dots" style="left:879px;top:605px"></div>
<div class="a" style="left:242px;top:638px;width:34px;height:23px;border:1px solid #9aa0aa;border-radius:3px;background:#fff"></div>
<div class="a" style="left:249px;top:644px;color:#333;font-size:9.6px">10</div>
<svg class="a" style="left:264px;top:647px" width="7" height="5" viewBox="0 0 7 5"><path d="M0.8 0.8 L3.5 3.8 L6.2 0.8" fill="none" stroke="#222" stroke-width="1.4"/></svg>
<div class="a" style="left:280px;top:644px;color:#333;font-size:9.6px">entries per page</div>
<div class="a" style="left:755px;top:638px;width:126px;height:24px;border:1px solid #a0a4ac;border-radius:2px;background:#fff"></div>
<div class="a" style="left:765px;top:645px;color:#8a8f98;font-size:9.4px">Search...</div>
<div class="a" style="left:248px;top:675px;color:#222;font-size:9.6px;font-weight:700">#</div>
<div class="a" style="left:316px;top:675px;color:#222;font-size:9.6px;font-weight:700">Customer</div>
<div class="a" style="left:469px;top:675px;color:#222;font-size:9.6px;font-weight:700">Product</div>
<div class="a" style="left:725px;top:675px;color:#222;font-size:9.6px;font-weight:700">Price</div>
<div class="a" style="left:802px;top:675px;color:#222;font-size:9.6px;font-weight:700">Status</div>
<svg class="a" style="left:290px;top:675px" width="6" height="13" viewBox="0 0 6 13"><path d="M1 4 L3 1.5 L5 4 Z" fill="#d0d0d4"/><path d="M1 10 L3 12.5 L5 10 Z" fill="#d0d0d4"/></svg>
<svg class="a" style="left:443px;top:675px" width="6" height="13" viewBox="0 0 6 13"><path d="M1 4 L3 1.5 L5 4 Z" fill="#d0d0d4"/><path d="M1 10 L3 12.5 L5 10 Z" fill="#d0d0d4"/></svg>
<svg class="a" style="left:699px;top:675px" width="6" height="13" viewBox="0 0 6 13"><path d="M1 4 L3 1.5 L5 4 Z" fill="#d0d0d4"/><path d="M1 10 L3 12.5 L5 10 Z" fill="#d0d0d4"/></svg>
<svg class="a" style="left:776px;top:675px" width="6" height="13" viewBox="0 0 6 13"><path d="M1 4 L3 1.5 L5 4 Z" fill="#d0d0d4"/><path d="M1 10 L3 12.5 L5 10 Z" fill="#d0d0d4"/></svg>
<svg class="a" style="left:872px;top:675px" width="6" height="13" viewBox="0 0 6 13"><path d="M1 4 L3 1.5 L5 4 Z" fill="#d0d0d4"/><path d="M1 10 L3 12.5 L5 10 Z" fill="#d0d0d4"/></svg>

<div class="a" style="left:242px;top:701px;color:#4d6aa8;font-size:9.6px">#2457</div>
<div class="a" style="left:313px;top:701px;color:#333;font-size:9.6px">Brandon Jacob</div>
<div class="a" style="left:465px;top:701px;color:#4d6aa8;font-size:9.6px">At praesentium minu</div>
<div class="a" style="left:721px;top:701px;color:#333;font-size:9.6px">$64</div>
<div class="a" style="left:798px;top:701px;width:42px;height:13px;background:#2c8a55;border-radius:3px;color:#fff;font-size:7.5px;font-weight:700;text-align:center;line-height:13px">Approved</div>
<!-- scrollbar -->
<div class="a" style="left:1266px;top:88px;width:11px;height:628px;background:#f0f1f8"></div>
<svg class="a" style="left:1267px;top:53px" width="9" height="6" viewBox="0 0 9 6"><path d="M0.5 5.5 L4.5 0.5 L8.5 5.5 Z" fill="#8a8a8a"/></svg>
<div class="a" style="left:1269px;top:62px;width:7px;height:297px;background:#8c8c8c;border-radius:4px"></div>
<svg class="a" style="left:1267px;top:704px" width="9" height="6" viewBox="0 0 9 6"><path d="M0.5 0.5 L8.5 0.5 L4.5 5.5 Z" fill="#6a6a6a"/></svg>
<!-- page title -->
<div class="a" style="left:223px;top:101px;color:#1f2a4a;font-size:16px">Dashboard</div>
<div class="a" style="left:223px;top:120px;color:#99a2b8;font-size:9.6px">Home &nbsp;/&nbsp; <span style="color:#525c72">Dashboard</span></div>


<!-- tooltip + cursor -->
<div class="a" style="left:158px;top:45px;width:85px;height:15px;background:#474745;border:1px solid #6b6b6b;border-radius:2px;color:#f2f2f2;font-size:8.1px;line-height:14px;padding-left:5px">View site information</div>
<svg class="a" style="left:150px;top:33px" width="20" height="28" viewBox="0 0 20 28"><path d="M1 1 L1 20 L5.5 16 L9 24 L12 22.7 L8.6 15 L15 15 Z" fill="#fff" stroke="#000" stroke-width="1.3" stroke-linejoin="round"/></svg>
<!-- frame overlay -->
<div class="a" style="left:0;top:717px;width:1280px;height:3px;background:#3b4358"></div>
<div class="a" style="left:0;top:46px;width:3px;height:674px;background:#3b4358"></div>
<div class="a" style="left:1277px;top:46px;width:3px;height:674px;background:#3b4358"></div>
<svg class="a" style="left:3px;top:710px" width="7" height="7" viewBox="0 0 7 7"><path d="M0 0 V7 H7 A7 7 0 0 1 0 0 Z" fill="#3b4358"/></svg>
<svg class="a" style="left:1270px;top:710px" width="7" height="7" viewBox="0 0 7 7"><path d="M7 0 V7 H0 A7 7 0 0 0 7 0 Z" fill="#3b4358"/></svg>
</body></html>
